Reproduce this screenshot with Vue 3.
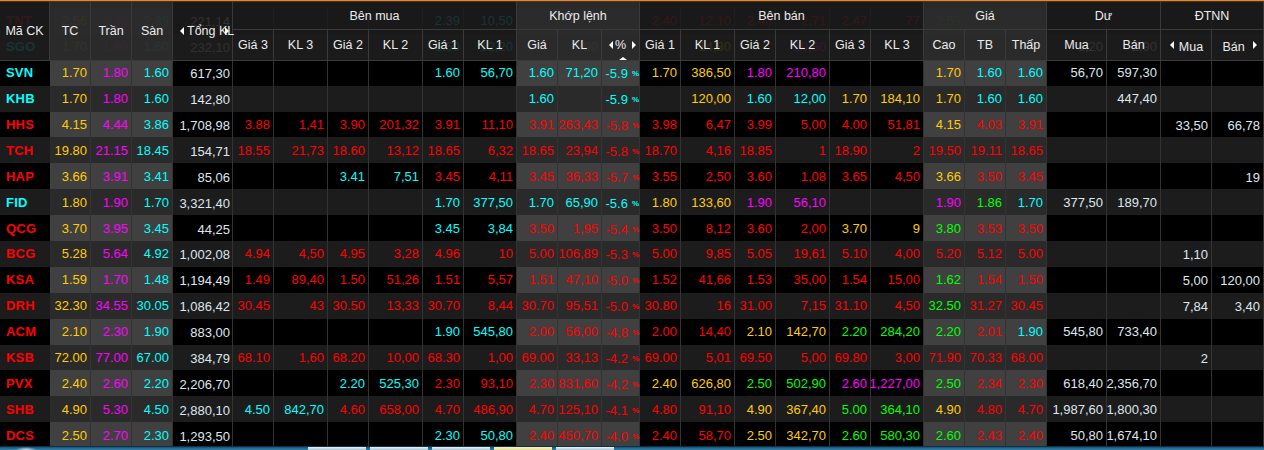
<template>
  <div class="board">
    <div class="topline"></div>
    <div class="table">
      <div class="head">
        <div class="hcell tall">Mã CK</div>
        <div class="hcell tall shade">TC</div>
        <div class="hcell tall shade">Trần</div>
        <div class="hcell tall shade">Sàn</div>
        <div class="hcell tall total">
          <i class="arrow left"></i>Tổng KL<i class="arrow right"></i>
        </div>
        <div class="hcell group g-buy">Bên mua</div>
        <div class="hcell group g-match shade">Khớp lệnh</div>
        <div class="hcell group g-sell">Bên bán</div>
        <div class="hcell group g-price shade">Giá</div>
        <div class="hcell group g-du">Dư</div>
        <div class="hcell group g-nn">ĐTNN</div>
        <div v-for="h in subHeads" :key="h.key" class="hcell sub" :class="h.cls">
          <i v-if="h.l" class="arrow left"></i>{{ h.label }}<i v-if="h.r" class="arrow right"></i>
          <i v-if="h.sort" class="arrow up"></i>
        </div>
      </div>
      <div v-for="(row, i) in rows" :key="row.name" class="row" :class="{ alt: i % 2 === 1 }">
        <div class="cell name" :class="row.color">{{ row.name }}</div>
        <div
          v-for="(c, j) in row.cells"
          :key="j"
          class="cell"
          :class="[c.color, { shade: isShaded(j), pct: j === 12, low: isLow(j), tong: j === 3 }]"
        >
          <template v-if="j === 12 && c.text">{{ c.text }}<small>%</small></template>
          <template v-else>{{ c.text }}</template>
        </div>
      </div>
    </div>
    <div class="taskbar">
      <span class="orb"></span>
      <div class="tabs">
        <span class="tab"></span>
        <span class="tab"></span>
        <span class="tab"></span>
        <span class="tab active"></span>
        <span class="tab"></span>
      </div>
    </div>
  </div>
</template>

<script setup>
const subHeads = [
  { key: 'g3', label: 'Giá 3' },
  { key: 'k3', label: 'KL 3' },
  { key: 'g2', label: 'Giá 2' },
  { key: 'k2', label: 'KL 2' },
  { key: 'g1', label: 'Giá 1' },
  { key: 'k1', label: 'KL 1' },
  { key: 'gia', label: 'Giá', cls: 'shade' },
  { key: 'kl', label: 'KL', cls: 'shade' },
  { key: 'pct', label: '%', cls: 'shade pct-head', l: true, r: true, sort: true },
  { key: 'sg1', label: 'Giá 1' },
  { key: 'sk1', label: 'KL 1' },
  { key: 'sg2', label: 'Giá 2' },
  { key: 'sk2', label: 'KL 2' },
  { key: 'sg3', label: 'Giá 3' },
  { key: 'sk3', label: 'KL 3' },
  { key: 'cao', label: 'Cao', cls: 'shade' },
  { key: 'tb', label: 'TB', cls: 'shade' },
  { key: 'thap', label: 'Thấp', cls: 'shade' },
  { key: 'dm', label: 'Mua' },
  { key: 'db', label: 'Bán' },
  { key: 'nm', label: 'Mua', cls: 'nn-m', l: true },
  { key: 'nb', label: 'Bán', cls: 'nn-b', r: true }
]

// ticker, then one token per column: first letter is the colour, - is an empty cell
const raw = [
  'r TNT y2.56 m2.73 c2.39 221,14 - - - - c2.39 c10,50 - - - r2.40 r12,10 r2.46 r2,71 r2.47 r77 g2.59 - - - - - -',
  'c SGO y1.70 m1.80 c1.60 232,10 - - - - c1.60 c12,20 - y,90 - - y14,80 - m19,60 - - - - - 1,20 2,90 - -',
  'c SVN y1.70 m1.80 c1.60 617,30 - - - - c1.60 c56,70 c1.60 c71,20 c-5.9 y1.70 y386,50 m1.80 m210,80 - - y1.70 c1.60 c1.60 56,70 597,30 - -',
  'c KHB y1.70 m1.80 c1.60 142,80 - - - - - - c1.60 - c-5.9 - y120,00 c1.60 c12,00 y1.70 y184,10 y1.70 c1.60 c1.60 - 447,40 - -',
  'r HHS y4.15 m4.44 c3.86 1,708,98 r3.88 r1,41 r3.90 r201,32 r3.91 r11,10 r3.91 r263,43 r-5.8 r3.98 r6,47 r3.99 r5,00 r4.00 r51,81 y4.15 r4.03 r3.91 - - 33,50 66,78',
  'r TCH y19.80 m21.15 c18.45 154,71 r18.55 r21,73 r18.60 r13,12 r18.65 r6,32 r18.65 r23,94 r-5.8 r18.70 r4,16 r18.85 r1 r18.90 r2 r19.50 r19.11 r18.65 - - - -',
  'r HAP y3.66 m3.91 c3.41 85,06 - - c3.41 c7,51 r3.45 r4,11 r3.45 r36,33 r-5.7 r3.55 r2,50 r3.60 r1,08 r3.65 r4,50 y3.66 r3.50 r3.45 - - - 19',
  'c FID y1.80 m1.90 c1.70 3,321,40 - - - - c1.70 c377,50 c1.70 c65,90 c-5.6 y1.80 y133,60 m1.90 m56,10 - - m1.90 g1.86 c1.70 377,50 189,70 - -',
  'r QCG y3.70 m3.95 c3.45 44,25 - - - - c3.45 c3,84 r3.50 r1,95 r-5.4 r3.50 r8,12 r3.60 r2,00 y3.70 y9 g3.80 r3.53 r3.50 - - - -',
  'r BCG y5.28 m5.64 c4.92 1,002,08 r4.94 r4,50 r4.95 r3,28 r4.96 r10 r5.00 r106,89 r-5.3 r5.00 r9,85 r5.05 r19,61 r5.10 r4,00 r5.20 r5.12 r5.00 - - 1,10 -',
  'r KSA y1.59 m1.70 c1.48 1,194,49 r1.49 r89,40 r1.50 r51,26 r1.51 r5,57 r1.51 r47,10 r-5.0 r1.52 r41,66 r1.53 r35,00 r1.54 r15,00 g1.62 r1.54 r1.50 - - 5,00 120,00',
  'r DRH y32.30 m34.55 c30.05 1,086,42 r30.45 r43 r30.50 r13,33 r30.70 r8,44 r30.70 r95,51 r-5.0 r30.80 r16 r31.00 r7,15 r31.10 r4,50 g32.50 r31.27 r30.45 - - 7,84 3,40',
  'r ACM y2.10 m2.30 c1.90 883,00 - - - - c1.90 c545,80 r2.00 r56,00 r-4.8 r2.00 r14,40 y2.10 y142,70 g2.20 g284,20 g2.20 r2.01 c1.90 545,80 733,40 - -',
  'r KSB y72.00 m77.00 c67.00 384,79 r68.10 r1,60 r68.20 r10,00 r68.30 r1,00 r69.00 r33,13 r-4.2 r69.00 r5,01 r69.50 r5,00 r69.80 r3,00 r71.90 r70.33 r68.00 - - 2 -',
  'r PVX y2.40 m2.60 c2.20 2,206,70 - - c2.20 c525,30 r2.30 r93,10 r2.30 r831,60 r-4.2 y2.40 y626,80 g2.50 g502,90 m2.60 m1,227,00 g2.50 r2.34 r2.30 618,40 2,356,70 - -',
  'r SHB y4.90 m5.30 c4.50 2,880,10 c4.50 c842,70 r4.60 r658,00 r4.70 r486,90 r4.70 r125,10 r-4.1 r4.80 r91,10 y4.90 y367,40 g5.00 g364,10 y4.90 r4.80 r4.70 1,987,60 1,800,30 - -',
  'r DCS y2.50 m2.70 c2.30 1,293,50 - - - - c2.30 c50,80 r2.40 r450,70 r-4.0 r2.40 r58,70 y2.50 y342,70 g2.60 g580,30 g2.60 r2.43 r2.40 50,80 1,674,10 - -'
]

const colors = { r: 'red', c: 'cyan', y: 'yellow', m: 'magenta', g: 'green' }

const parseCell = token => {
  if (token === '-') return { text: '', color: '' }
  const color = colors[token[0]]
  return color ? { text: token.slice(1), color } : { text: token, color: 'white' }
}

const rows = raw.map(line => {
  const [c, name, ...cells] = line.split(' ')
  return { name, color: colors[c], cells: cells.map(parseCell) }
})

// columns with the lighter background, counted after the ticker
const shaded = [0, 1, 2, 10, 11, 12, 19, 20, 21]
const isShaded = j => shaded.includes(j)
// these columns sit a pixel lower in the reference grid
const lower = [3, 12, 24, 25]
const isLow = j => lower.includes(j)
</script>

<style scoped>
.board {
  position: relative;
  width: 1264px;
  height: 450px;
  overflow: hidden;
  background: #000;
  font-family: "Liberation Sans", Arial, sans-serif;
}

.topline {
  height: 1px;
  background: #e5862c;
  border-bottom: 1px solid #4a3320;
}

.table {
  position: relative;
  padding-top: 6px;
}

.head,
.row {
  display: grid;
  grid-template-columns: 50px 41px 41px 41px 60px 41px 54px 41px 54px 41px 53px 41px 44px 38px 41px 54px 41px 54px 41px 53px 41px 41px 41px 60px 54px 51px 52px;
}

.head {
  position: absolute;
  top: 0;
  left: 0;
  right: 0;
  height: 58px;
  grid-template-rows: 28px 30px;
  background: rgba(28, 28, 28, 0.9);
  border-bottom: 1px solid #3a3a3a;
  box-sizing: content-box;
  color: #ececec;
  font-size: 12.5px;
}

.hcell {
  position: relative;
  display: flex;
  align-items: center;
  justify-content: center;
  border-right: 1px solid #3a3a3a;
  box-sizing: border-box;
  white-space: nowrap;
}

.hcell.shade {
  background: rgba(52, 52, 52, 0.6);
}

.tall {
  grid-row: 1 / 3;
}

.total {
  justify-content: flex-start;
  padding-left: 14px;
  overflow: visible;
}

.group {
  border-bottom: 1px solid #3a3a3a;
}

.g-buy { grid-column: 6 / 12; }
.g-match { grid-column: 12 / 15; }
.g-sell { grid-column: 15 / 21; }
.g-price { grid-column: 21 / 24; }
.g-du { grid-column: 24 / 26; }
.g-nn { grid-column: 26 / 28; }

.sub {
  grid-row: 2;
}

.nn-m {
  padding: 3px 0 0 10px;
}

.nn-b {
  padding: 3px 8px 0 0;
}

.arrow {
  position: absolute;
  top: 50%;
  margin-top: -4px;
  width: 0;
  height: 0;
  border-top: 4px solid transparent;
  border-bottom: 4px solid transparent;
}

.arrow.left {
  left: 7px;
  border-right: 4px solid #fff;
}

.arrow.right {
  right: 3px;
  border-left: 4px solid #fff;
}

.nn-m .arrow.left {
  left: 9px;
}

.nn-b .arrow.right {
  right: 6px;
}

.arrow.up {
  top: auto;
  bottom: 0;
  left: 17px;
  margin: 0;
  border: 0 solid transparent;
  border-left-width: 4px;
  border-right-width: 4px;
  border-bottom: 3px solid #fff;
}

.row {
  height: 25.9px;
  background: #000;
  font-size: 13px;
}

.row.alt {
  background: #1c1c1c;
}

.cell {
  display: flex;
  align-items: center;
  justify-content: flex-end;
  padding-right: 3px;
  border-right: 1px solid #333;
  box-sizing: border-box;
  white-space: nowrap;
}

.cell.shade {
  background: #404040;
}

.alt .cell.shade {
  background: #2a2a2a;
}

.cell.name {
  justify-content: flex-start;
  padding-left: 6px;
  font-weight: bold;
  letter-spacing: 0.2px;
  border-right: 0;
}

.low {
  padding-top: 2px;
}

.tong {
  padding-right: 2px;
}

.pct {
  padding-right: 0;
}

.pct small {
  margin-left: 4px;
  font-size: 8px;
  font-weight: bold;
}

.red { color: #f00; }
.cyan { color: #0ff; }
.yellow { color: #fc0; }
.magenta { color: #f0f; }
.green { color: #0f0; }
.white { color: #dfe6ee; }

.taskbar {
  position: absolute;
  left: 0;
  right: 0;
  bottom: 0;
  height: 4px;
  background: linear-gradient(#1b4f70, #2f86ad);
  border-top: 1px solid #0e3148;
  box-sizing: border-box;
}

.orb {
  position: absolute;
  left: 15px;
  top: 0;
  width: 22px;
  height: 3px;
  background: radial-gradient(ellipse at center bottom, #d5e8f2, transparent 70%);
}

.tabs {
  display: flex;
  gap: 4px;
  margin-left: 308px;
}

.tab {
  width: 58px;
  height: 3px;
  background: linear-gradient(#eef4f7, #a8c6d6);
}

.tab.active {
  background: linear-gradient(#f8f4c0, #e8e08e);
}
</style>
